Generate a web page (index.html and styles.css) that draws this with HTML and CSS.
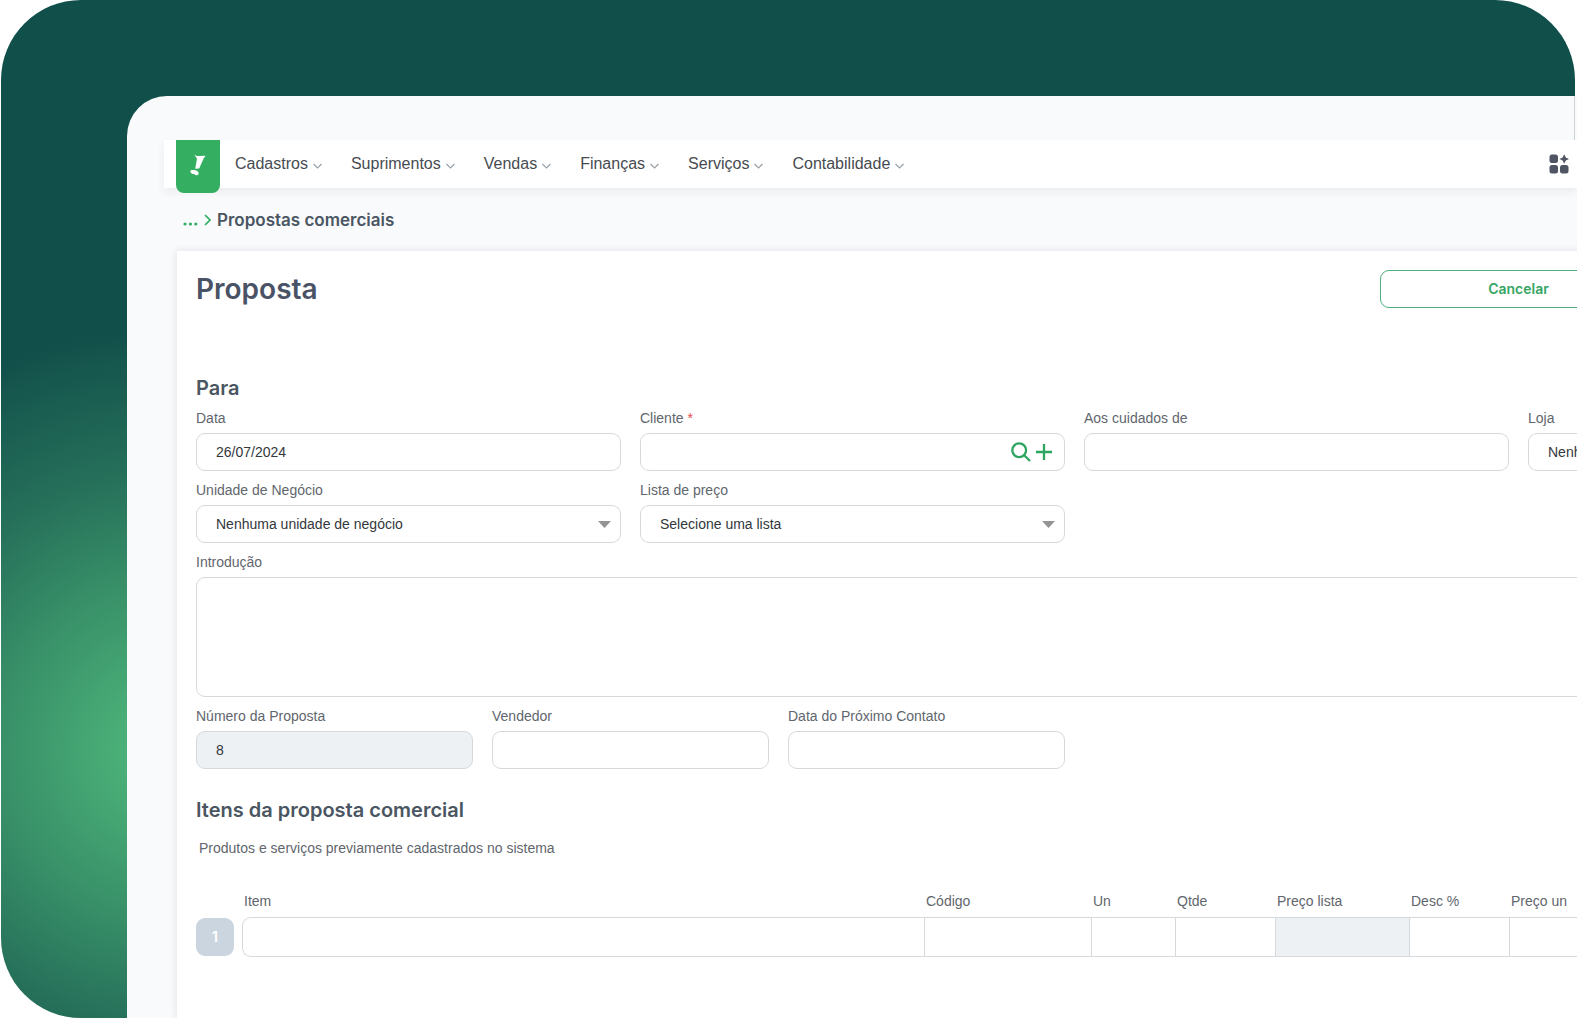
FILE: index.html
```html
<!DOCTYPE html>
<html lang="pt-BR">
<head>
<meta charset="utf-8">
<meta name="viewport" content="width=device-width, initial-scale=1">
<title>Propostas comerciais</title>
<link rel="stylesheet" href="styles.css">
</head>
<body>
<div class="stage">
  <div class="panel">
    <div class="panel-top"></div>
    <header class="navbar">
      <a class="logo" href="#" aria-label="Início">
        <svg width="16" height="22" viewBox="0 0 16 22" fill="#fff" aria-hidden="true">
          <path d="M4.200 0.500C5.500 1.700 7 2 9 2L15.600 1.800L13.600 4.600L9.200 14.600L5.200 14.800L7 4.800Z"/>
          <path d="M1 16.200C3 15.800 6 16.200 7.600 17.200C9.400 18.400 8.800 21 7 21.300C5.600 21.400 5 20.400 3.400 20C0.400 19.600 -0.400 17.200 1 16.200Z"/>
        </svg>
      </a>
      <nav class="menu">
        <a href="#">Cadastros <svg class="chevron" viewBox="0 0 9 6"><path d="M0.500 1L4.500 5L8.500 1"/></svg></a>
        <a href="#">Suprimentos <svg class="chevron" viewBox="0 0 9 6"><path d="M0.500 1L4.500 5L8.500 1"/></svg></a>
        <a href="#">Vendas <svg class="chevron" viewBox="0 0 9 6"><path d="M0.500 1L4.500 5L8.500 1"/></svg></a>
        <a href="#">Finanças <svg class="chevron" viewBox="0 0 9 6"><path d="M0.500 1L4.500 5L8.500 1"/></svg></a>
        <a href="#">Serviços <svg class="chevron" viewBox="0 0 9 6"><path d="M0.500 1L4.500 5L8.500 1"/></svg></a>
        <a href="#">Contabilidade <svg class="chevron" viewBox="0 0 9 6"><path d="M0.500 1L4.500 5L8.500 1"/></svg></a>
      </nav>
      <button class="apps" type="button" aria-label="Aplicativos">
        <svg width="20" height="20" viewBox="0 0 20 20" fill="#4f5563">
          <rect x="0.5" y="0.5" width="8.5" height="8.5" rx="2.5"/>
          <rect x="0.5" y="11" width="8.5" height="8.5" rx="2.5"/>
          <rect x="11" y="11" width="8.5" height="8.5" rx="2.5"/>
          <path d="M15.2 0.2L16.8 3.6L20 5L16.8 6.4L15.2 9.8L13.6 6.4L10.4 5L13.6 3.6Z"/>
        </svg>
      </button>
    </header>

    <div class="breadcrumb">
      <a href="#" aria-label="Níveis anteriores"><svg width="15" height="4" viewBox="0 0 15 4" fill="#2fae62"><circle cx="2" cy="2" r="1.6"/><circle cx="7.4" cy="2" r="1.6"/><circle cx="12.8" cy="2" r="1.6"/></svg></a>
      <svg width="7" height="12" viewBox="0 0 7 12" fill="none" stroke="#2fae62" stroke-width="1.7"><path d="M1 1L6 6L1 11"/></svg>
      <span>Propostas comerciais</span>
    </div>

    <form class="card">
      <div class="grid title-row">
        <h1>Proposta</h1>
        <button class="cancel" type="button">Cancelar</button>
      </div>

      <h2 class="section-title">Para</h2>
      <div class="grid">
        <div class="field quarter">
          <label for="data">Data</label>
          <input id="data" type="text" value="26/07/2024">
        </div>
        <div class="field quarter">
          <label for="cliente">Cliente <span class="required">*</span></label>
          <div class="lookup">
            <input id="cliente" type="text">
            <button type="button" aria-label="Buscar cliente"><svg width="20" height="20" viewBox="0 0 20 20"><circle cx="8.2" cy="8.2" r="6.9"/><path d="M13.2 13.2L19 19"/></svg></button>
            <button type="button" aria-label="Novo cliente"><svg width="16" height="16" viewBox="0 0 16 16"><path d="M8 0V16M0 8H16"/></svg></button>
          </div>
        </div>
        <div class="field quarter">
          <label for="cuidados">Aos cuidados de</label>
          <input id="cuidados" type="text">
        </div>
        <div class="field quarter">
          <label for="loja">Loja</label>
          <select id="loja"><option>Nenhuma</option></select>
        </div>
        <div class="field quarter">
          <label for="unidade">Unidade de Negócio</label>
          <select id="unidade"><option>Nenhuma unidade de negócio</option></select>
        </div>
        <div class="field quarter">
          <label for="lista">Lista de preço</label>
          <select id="lista"><option>Selecione uma lista</option></select>
        </div>
        <div class="field full">
          <label for="introducao">Introdução</label>
          <textarea id="introducao"></textarea>
        </div>
        <div class="field sixth">
          <label for="numero">Número da Proposta</label>
          <input id="numero" type="text" value="8" readonly>
        </div>
        <div class="field sixth">
          <label for="vendedor">Vendedor</label>
          <input id="vendedor" type="text">
        </div>
        <div class="field sixth">
          <label for="contato">Data do Próximo Contato</label>
          <input id="contato" type="text">
        </div>
      </div>

      <h2 class="section-title items-title">Itens da proposta comercial</h2>
      <p class="hint">Produtos e serviços previamente cadastrados no sistema</p>

      <table class="items">
        <colgroup>
          <col class="c-num"><col class="c-item"><col class="c-code"><col class="c-un"><col class="c-qty"><col class="c-list"><col class="c-desc"><col>
        </colgroup>
        <thead>
          <tr><td></td><th id="h1">Item</th><th id="h2">Código</th><th id="h3">Un</th><th id="h4">Qtde</th><th id="h5">Preço lista</th><th id="h6">Desc %</th><th id="h7">Preço un</th></tr>
        </thead>
        <tbody>
          <tr>
            <td><button class="row-number" type="button">1</button></td>
            <td><input class="first" type="text" aria-labelledby="h1"></td>
            <td><input type="text" aria-labelledby="h2"></td>
            <td><input type="text" aria-labelledby="h3"></td>
            <td><input type="text" aria-labelledby="h4"></td>
            <td><input type="text" aria-labelledby="h5" readonly></td>
            <td><input type="text" aria-labelledby="h6"></td>
            <td><input type="text" aria-labelledby="h7"></td>
          </tr>
        </tbody>
      </table>
    </form>
  </div>
</div>
</body>
</html>
```
FILE: styles.css
```css
* { box-sizing: border-box; }

body {
  margin: 0;
  background: #fff;
  color: #5f666d;
  font: 14px/20px "Liberation Sans", Arial, sans-serif;
}

h1, h2, p { margin: 0; }
a { color: inherit; text-decoration: none; }
button, input, select, textarea { font: inherit; }
button { padding: 0; border: 0; background: none; }

.stage {
  display: flex;
  min-height: 100vh;
  margin-left: 1px;
  padding: 96px 0 0 126px;
  position: relative;
}

/* Rounded green backdrop; the window covers its right edge */
.stage::before {
  content: "";
  position: absolute;
  inset: 0 2px 0 0;
  border-radius: 80px 80px 0 80px;
  background:
    radial-gradient(circle at 170px 750px, #52b97c 0, #4bb078 45px, #389068 170px, #27725b 270px, #114f4a 425px);
}

/* Application window, cutting off whatever is wider than it */
.panel {
  position: relative;
  flex: 1;
  min-width: 0;
  overflow: hidden;
  padding-left: 37px;
  border-radius: 40px 0 0 0;
  background: #f9fafc;
}

.panel-top {
  height: 44px;
  margin-right: 2px;
  border-right: 1px solid #ccd3d2;
}

.navbar {
  display: flex;
  align-items: center;
  height: 48px;
  padding: 0 8px 0 12px;
  background: #fff;
  box-shadow: 0 4px 8px rgba(40, 50, 60, 0.07);
}

.logo {
  display: flex;
  align-items: center;
  justify-content: center;
  align-self: flex-start;
  width: 44px;
  height: 53px;
  padding-bottom: 4px;
  border-radius: 0 0 8px 8px;
  background: #34ae60;
}

.menu {
  display: flex;
  gap: 29px;
  margin-left: 15px;
  color: #474b51;
  font-size: 16px;
}

.menu a { display: flex; align-items: center; gap: 5px; }

.chevron {
  width: 9px;
  height: 6px;
  margin-top: 4px;
  fill: none;
  stroke: #9aa0a5;
  stroke-width: 1.2;
}

.apps { display: flex; margin-left: auto; }

.breadcrumb {
  display: flex;
  align-items: center;
  gap: 6px;
  height: 63px;
  padding-left: 19px;
  color: #4a5662;
  font: 600 17px/24px Inter, sans-serif;
}

.breadcrumb a { display: flex; padding-top: 8px; }
.breadcrumb svg { flex: none; }

.card {
  width: calc(100% + 382px);
  min-height: 767px;
  margin-left: 13px;
  padding: 19px;
  background: #fff;
  box-shadow: 0 0 7px 1px rgba(40, 50, 60, 0.1);
}

.grid {
  display: grid;
  grid-template-columns: repeat(12, minmax(0, 1fr));
  gap: 9px 19px;
}

.quarter { grid-column: span 3; }
.sixth { grid-column: span 2; }
.full { grid-column: 1 / -1; }

.title-row { align-items: center; margin-bottom: 68px; }

h1 {
  grid-column: span 8;
  color: #4a5365;
  font: 600 28px/38px Inter, sans-serif;
}

.cancel {
  grid-column: span 2;
  height: 38px;
  border: 1px solid #4fae7c;
  border-radius: 9px;
  color: #35a564;
  font: 600 14px/20px Inter, sans-serif;
}

.section-title {
  margin-bottom: 8px;
  color: #4a5662;
  font: 600 20px/24px Inter, sans-serif;
}

.items-title { margin: 29px 0 16px; }

.field label { display: block; margin-bottom: 5px; }
.required { color: #ec4b4b; }

input, select, textarea {
  display: block;
  width: 100%;
  height: 38px;
  margin: 0;
  padding: 0 19px;
  border: 1px solid #d6d9dc;
  border-radius: 9px;
  background: #fff;
  color: #33373c;
  outline: none;
}

textarea { height: 120px; resize: none; }
input[readonly] { background: #edf1f4; }

select {
  appearance: none;
  background: #fff url("data:image/svg+xml,%3Csvg xmlns='http://www.w3.org/2000/svg' width='13' height='7'%3E%3Cpath d='M0 0H13L6.500 7Z' fill='%23949494'/%3E%3C/svg%3E") no-repeat right 9px center;
}

.lookup {
  display: flex;
  align-items: center;
  gap: 5px;
  height: 38px;
  padding-right: 12px;
  border: 1px solid #d6d9dc;
  border-radius: 9px;
}

.lookup input { flex: 1; min-width: 0; height: 36px; border: 0; }
.lookup button { display: flex; }
.lookup svg { fill: none; stroke: #2da560; stroke-width: 2.3; }

.hint { padding-left: 3px; margin-bottom: 33px; }

.items {
  width: 100%;
  border-collapse: collapse;
  table-layout: fixed;
}

.items th, .items td { padding: 0; }
.items th { height: 26px; padding-left: 2px; font-weight: 400; text-align: left; vertical-align: top; }

.c-num { width: 46px; }
.c-item { width: 682px; }
.c-code { width: 167px; }
.c-un { width: 84px; }
.c-qty { width: 100px; }
.c-list { width: 134px; }
.c-desc { width: 100px; }

.items input { height: 40px; border-right-width: 0; border-radius: 0; }
.items .first { border-radius: 9px 0 0 9px; }

.row-number {
  display: block;
  width: 38px;
  height: 38px;
  border-radius: 9px;
  background: #cbd5e0;
  color: #fff;
  font: 600 14px/20px Inter, sans-serif;
}
```
